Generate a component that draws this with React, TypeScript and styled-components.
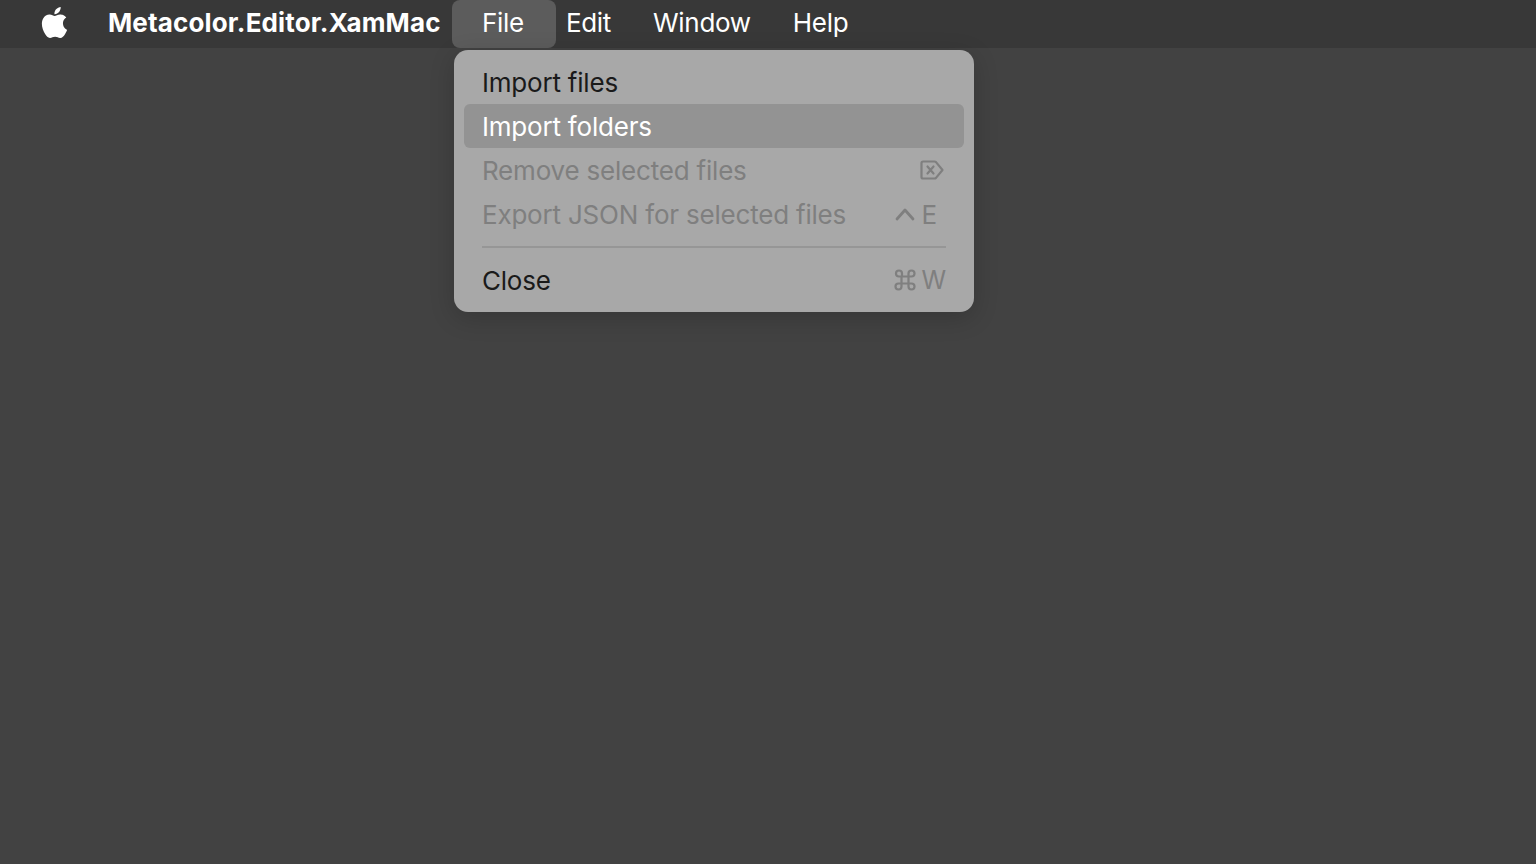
import styled, { createGlobalStyle } from "styled-components";
import { SiApple } from "react-icons/si";

const GlobalStyle = createGlobalStyle`
    html, body {
        margin: 0;
        height: 100%;
        background: #424242;
    }
    body {
        font-family: Inter, "Liberation Sans", sans-serif;
        overflow: hidden;
    }
`;

const menuTitles = ["Edit", "Window", "Help"];

const App = () => {
    return (
        <Screen>
            <GlobalStyle />
            <MenuBar>
                <AppleSlot>
                    <SiApple size={31} color="#ffffff" />
                </AppleSlot>
                <AppName>Metacolor.Editor.XamMac</AppName>
                <FileSlot>
                    <MenuTitle $active>File</MenuTitle>
                    <Dropdown>
                        <MenuItem>
                            <ItemLabel>Import files</ItemLabel>
                        </MenuItem>
                        <MenuItem $highlighted>
                            <ItemLabel>Import folders</ItemLabel>
                        </MenuItem>
                        <MenuItem $disabled>
                            <ItemLabel>Remove selected files</ItemLabel>
                            <DeleteIcon />
                        </MenuItem>
                        <MenuItem $disabled>
                            <ItemLabel>Export JSON for selected files</ItemLabel>
                            <Shortcut>
                                <CaretIcon />
                                <ShortcutKey $inset>E</ShortcutKey>
                            </Shortcut>
                        </MenuItem>
                        <Separator />
                        <MenuItem>
                            <ItemLabel>Close</ItemLabel>
                            <Shortcut>
                                <CommandIcon />
                                <ShortcutKey $small>W</ShortcutKey>
                            </Shortcut>
                        </MenuItem>
                    </Dropdown>
                </FileSlot>
                {menuTitles.map((title) => (
                    <MenuTitle key={title}>{title}</MenuTitle>
                ))}
            </MenuBar>
        </Screen>
    );
};

const DeleteIcon = () => (
    <DeleteSvg width="24" height="20" viewBox="0 0 24 20" fill="none" stroke="#7f7f7f" strokeWidth="2.2" strokeLinejoin="round" strokeLinecap="round">
        <path d="M3 1.500h11.500c.6 0 1.100.2 1.500.6l6.500 7.900-6.500 7.900c-.4.4-.9.6-1.500.6H3c-.9 0-1.500-.6-1.500-1.500V3c0-.9.6-1.500 1.500-1.500z" />
        <path d="M7.500 6.500l6 7M13.500 6.500l-6 7" />
    </DeleteSvg>
);

const CaretIcon = () => (
    <IconSvg width="20" height="14" viewBox="0 0 20 14" fill="none" stroke="#7f7f7f" strokeWidth="2.8" strokeLinecap="round" strokeLinejoin="round">
        <path d="M2 12L10 3l8 9" />
    </IconSvg>
);

const CommandIcon = () => (
    <CommandSvg width="22" height="22" viewBox="0 0 22 22" fill="none" stroke="#7f7f7f" strokeWidth="2.2">
        <path d="M7.500 7.500h7v7h-7zM7.500 7.500H5A3 3 0 1 1 8 4.500V7.500M14.500 7.500V4.500A3 3 0 1 1 17.500 7.500H14.500M14.500 14.500H17.500A3 3 0 1 1 14.500 17.500V14.500M7.500 14.500V17.500A3 3 0 1 1 4.500 14.500H7.500" />
    </CommandSvg>
);

const Screen = styled.div`
    width: 1536px;
    height: 864px;
    background: #424242;
`;

const MenuBar = styled.div`
    display: flex;
    align-items: stretch;
    height: 48px;
    background: #383838;
    color: #ffffff;
`;

const AppleSlot = styled.div`
    display: flex;
    align-items: center;
    justify-content: center;
    width: 87px;
    padding: 0 0 3px 21px;
    box-sizing: border-box;
`;

const AppName = styled.div`
    display: flex;
    align-items: center;
    padding: 0 20.4px 3px 21px;
    font-size: 26px;
    font-weight: 700;
    letter-spacing: 0.13px;
`;

const FileSlot = styled.div`
    position: relative;
    display: flex;
`;

const MenuTitle = styled.div<{ $active?: boolean }>`
    display: flex;
    align-items: center;
    padding: ${(props) => (props.$active ? "0 32px 3px 30px" : "0 21px 3px")};
    margin: ${(props) => (props.$active ? "0 -11px 0 -9px" : "0")};
    font-size: 26px;
    font-weight: 400;
    letter-spacing: -0.3px;
    border-radius: 8px;
    background: ${(props) => (props.$active ? "#5c5c5c" : "transparent")};
`;

const Dropdown = styled.div`
    position: absolute;
    top: 50px;
    left: -7px;
    width: 520px;
    height: 262px;
    box-sizing: border-box;
    padding: 10px 10px 9px;
    border-radius: 14px;
    background: #a8a8a8;
    box-shadow: 0 6px 24px rgba(0, 0, 0, 0.18);
`;

const MenuItem = styled.div<{ $highlighted?: boolean; $disabled?: boolean }>`
    display: flex;
    align-items: center;
    justify-content: space-between;
    height: 44px;
    padding: 0 18px;
    border-radius: 6px;
    font-size: 26px;
    letter-spacing: -0.2px;
    color: ${(props) =>
        props.$highlighted ? "#ffffff" : props.$disabled ? "#7f7f7f" : "#1a1a1a"};
    background: ${(props) => (props.$highlighted ? "#939393" : "transparent")};
`;

const ItemLabel = styled.span`
    white-space: nowrap;
`;

const Shortcut = styled.span`
    display: flex;
    align-items: center;
    gap: 7px;
    color: #7f7f7f;
`;

const ShortcutKey = styled.span<{ $inset?: boolean; $small?: boolean }>`
    font-size: ${(props) => (props.$small ? "25px" : "26px")};
    margin-right: ${(props) => (props.$inset ? "9px" : "0")};
`;

const IconSvg = styled.svg`
    display: block;
    flex-shrink: 0;
`;

const DeleteSvg = styled(IconSvg)`
    margin-right: 2px;
`;

const CommandSvg = styled(IconSvg)`
    margin-right: -1px;
`;

const Separator = styled.div`
    height: 2px;
    margin: 10px 18px;
    background: #969696;
`;

export default App;
